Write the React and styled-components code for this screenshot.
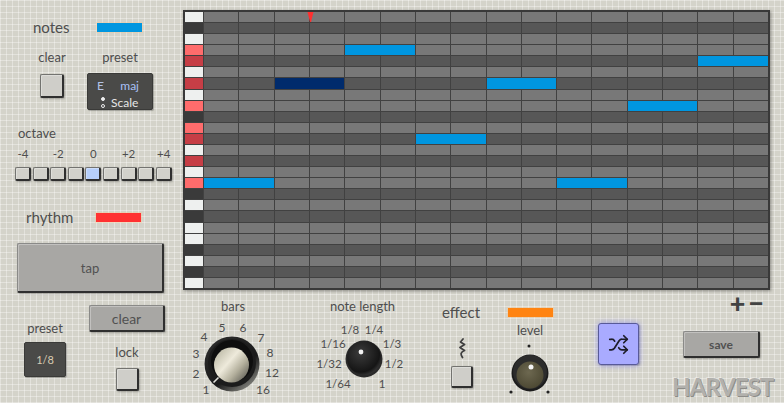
import React from "react";
import styled, { createGlobalStyle, css } from "styled-components";
import { Shuffle } from "lucide-react";

const GlobalStyle = createGlobalStyle`
  html, body { margin: 0; padding: 0; }
  body { font-family: "Lato", "Open Sans", sans-serif; background: #d5d4cb; }
`;

const bevel = css`
  box-sizing: border-box;
  border: 1px solid #737370;
  border-right: 2px solid #2f2f2f;
  border-bottom: 2px solid #2f2f2f;
  border-radius: 2px;
  box-shadow: 1px 1px 2px rgba(0, 0, 0, 0.25), inset 1px 1px 0 rgba(255, 255, 255, 0.3);
`;

const Panel = styled.div`
  width: 784px;
  height: 403px;
  overflow: hidden;
  display: flex;
  background-color: #d4d3ca;
  background-image: linear-gradient(rgba(255, 255, 255, 0.35) 1px, transparent 1px),
    linear-gradient(90deg, rgba(255, 255, 255, 0.35) 1px, transparent 1px);
  background-size: 6px 6px;
  color: #4e4e4e;
`;

const Side = styled.div`
  width: 183px;
  flex-shrink: 0;
  display: flex;
  flex-direction: column;
`;

const Label = styled.div`
  font-size: ${(p) => p.size || 13}px;
  line-height: 14px;
  white-space: nowrap;
  text-align: ${(p) => (p.center ? "center" : "left")};
`;

const TitleRow = styled.div`
  display: flex;
  align-items: center;
  height: 16px;
  margin-top: ${(p) => p.top}px;
  padding-left: ${(p) => p.left}px;
`;

const TitleText = styled.div`
  width: ${(p) => p.w}px;
  font-size: 15px;
  line-height: 16px;
`;

const ColorBar = styled.div`
  width: 45px;
  height: 9px;
  background: ${(p) => p.color};
  box-shadow: 0 0 0 1px rgba(255, 200, 140, 0.35);
`;

const PairRow = styled.div`
  display: flex;
  margin-top: 15px;
  padding-left: 38px;
`;

const Stack = styled.div`
  display: flex;
  flex-direction: column;
  align-items: center;
  width: ${(p) => p.w}px;
  margin-left: ${(p) => p.ml || 0}px;
  margin-top: ${(p) => p.mt || 0}px;
`;

const SmallButton = styled.div`
  ${bevel};
  width: ${(p) => p.size}px;
  height: ${(p) => p.size}px;
  margin-top: ${(p) => p.mt || 0}px;
  background: #cfcec9;
`;

const DarkBox = styled.div`
  box-sizing: border-box;
  display: flex;
  flex-direction: column;
  justify-content: ${(p) => (p.centered ? "center" : "flex-start")};
  align-items: ${(p) => (p.centered ? "center" : "stretch")};
  width: ${(p) => p.w}px;
  height: ${(p) => p.h}px;
  margin-top: ${(p) => p.mt || 0}px;
  background: #4a4a48;
  border: 1px solid #3a3a38;
  border-radius: 2px;
  box-shadow: 1px 1px 1px rgba(0, 0, 0, 0.25);
  color: ${(p) => p.ink || "#e6e6e6"};
  font-size: ${(p) => p.fs || 12}px;
`;

const PresetLine = styled.div`
  display: flex;
  align-items: center;
  justify-content: ${(p) => p.justify || "flex-start"};
  padding: ${(p) => p.pad};
  height: 14px;
`;

const Blueish = styled.span`
  color: ${(p) => p.color};
`;

const Dots = styled.div`
  display: flex;
  flex-direction: column;
  gap: 3px;
  margin-right: 6px;
`;

const Dot = styled.div`
  width: 4px;
  height: 4px;
  border-radius: 50%;
  box-sizing: border-box;
  border: 1px solid #eee;
  background: ${(p) => (p.filled ? "#eee" : "transparent")};
`;

const OctaveGrid = styled.div`
  display: grid;
  grid-template-columns: repeat(9, 16px);
  column-gap: 1.6px;
  margin-left: 15px;
  margin-top: ${(p) => p.mt}px;
`;

const OctaveNum = styled.div`
  grid-column: ${(p) => p.col} / span 1;
  font-size: 11.5px;
  line-height: 12px;
  text-align: center;
  white-space: nowrap;
  justify-self: center;
`;

const OctaveBox = styled.div`
  ${bevel};
  height: 14px;
  background: ${(p) => (p.active ? "#b6cffb" : "#d2d1cb")};
`;

const BigButton = styled.div`
  ${bevel};
  display: flex;
  align-items: center;
  justify-content: center;
  width: ${(p) => p.w}px;
  height: ${(p) => p.h}px;
  margin-top: ${(p) => p.mt || 0}px;
  margin-left: ${(p) => p.ml || 0}px;
  background: #a8a7a4;
  border-top-color: #8a8a88;
  border-left-color: #8a8a88;
  font-size: ${(p) => p.fs || 13}px;
  font-weight: ${(p) => (p.bold ? 700 : 400)};
  color: #515151;
`;

const BottomLeft = styled.div`
  display: flex;
  margin-top: 12px;
  padding-left: 24px;
`;

const Main = styled.div`
  display: flex;
  flex-direction: column;
  flex: 1;
`;

const Frame = styled.div`
  position: relative;
  box-sizing: border-box;
  width: 587px;
  height: 280px;
  margin-top: 10px;
  border: 2px solid #393939;
  background: #414141;
  box-shadow: 1px 1px 3px rgba(0, 0, 0, 0.35);
`;

const Roll = styled.div`
  display: grid;
  grid-template-columns: 18px repeat(16, 1fr);
  grid-template-rows: repeat(25, 1fr);
  column-gap: 1px;
  row-gap: 1px;
  width: 100%;
  height: 100%;
`;

const keyColors = {
  w: "#eef0ef",
  b: "#3a3a3a",
  lr: "#ff6c6c",
  dr: "#c63e46",
};

const Key = styled.div`
  grid-row: ${(p) => p.row + 1};
  grid-column: 1;
  background: ${(p) => keyColors[p.kind]};
`;

const Cell = styled.div`
  grid-row: ${(p) => p.row + 1};
  grid-column: ${(p) => p.col + 2};
  background: ${(p) => (p.dark ? "#575757" : "#787878")};
`;

const Note = styled.div`
  grid-row: ${(p) => p.row + 1};
  grid-column: ${(p) => p.col + 2} / span 2;
  background: ${(p) => p.color};
  z-index: 1;
`;

const Playhead = styled.svg`
  position: absolute;
  left: 122px;
  top: 0;
  z-index: 2;
`;

const Deck = styled.div`
  display: flex;
  align-items: flex-start;
  height: 113px;
`;

const Group = styled.div`
  display: flex;
  flex-direction: column;
  align-items: ${(p) => p.align || "center"};
  width: ${(p) => p.w}px;
  margin-left: ${(p) => p.ml || 0}px;
  margin-top: ${(p) => p.mt || 0}px;
  flex-shrink: 0;
`;

const DialText = styled.text`
  font-family: "Lato", "Open Sans", sans-serif;
  font-size: ${(p) => p.size}px;
  fill: #4e4e4e;
`;

const Row = styled.div`
  display: flex;
  align-items: ${(p) => p.align || "flex-start"};
`;

const ShuffleButton = styled.div`
  box-sizing: border-box;
  display: flex;
  align-items: center;
  justify-content: center;
  width: 41px;
  height: 42px;
  margin-left: 42px;
  margin-top: 33px;
  background: #a9abff;
  border: 1.5px solid #585a98;
  border-radius: 3px;
  box-shadow: 0 0 6px rgba(140, 140, 255, 0.7), 1px 1px 2px rgba(0, 0, 0, 0.3);
  color: #1e1e2a;
`;

const PlusMinus = styled.div`
  align-self: flex-end;
  margin-right: 17px;
  margin-top: 4px;
  font-size: 27px;
  font-weight: 900;
  line-height: 18px;
  color: #434343;
  letter-spacing: 3px;
`;

const Logo = styled.div`
  margin-top: 17px;
  font-size: 24px;
  font-weight: 700;
  line-height: 24px;
  letter-spacing: -1px;
  white-space: nowrap;
  color: #b2b1ad;
  text-shadow: 1px 1px 0 #8d8c88, -1px -1px 0 rgba(255, 255, 255, 0.4);
`;

const keys = ["w", "b", "w", "lr", "dr", "w", "dr", "w", "lr", "b", "lr", "dr", "w", "dr", "w", "lr", "b", "w", "b", "w", "w", "b", "w", "b", "w"];

const notes = [
  { row: 3, col: 4, color: "#0096e0" },
  { row: 4, col: 14, color: "#0096e0" },
  { row: 6, col: 2, color: "#002b6c" },
  { row: 6, col: 8, color: "#0096e0" },
  { row: 8, col: 12, color: "#0096e0" },
  { row: 11, col: 6, color: "#0096e0" },
  { row: 15, col: 0, color: "#0096e0" },
  { row: 15, col: 10, color: "#0096e0" },
];

const barsLabels = [
  ["1", 23, 76], ["2", 13, 60], ["3", 13, 40], ["4", 21, 23], ["5", 39, 14],
  ["6", 60, 14], ["7", 78, 24], ["8", 87, 39], ["12", 89, 59], ["16", 80, 76],
];

const lengthLabels = [
  ["1/8", 40, 16], ["1/4", 64, 16], ["1/16", 23, 30], ["1/3", 82, 30],
  ["1/32", 19, 50], ["1/2", 84, 50], ["1/64", 28, 70], ["1", 72, 70],
];

function PianoRoll() {
  return (
    <Frame>
      <Roll>
        {keys.map((k, r) => (
          <React.Fragment key={r}>
            <Key row={r} kind={k} />
            {Array.from({ length: 16 }, (_, c) => (
              <Cell key={c} row={r} col={c} dark={k === "b" || k === "dr"} />
            ))}
          </React.Fragment>
        ))}
        {notes.map((n, i) => (
          <Note key={i} {...n} />
        ))}
      </Roll>
      <Playhead width="8" height="11" viewBox="0 0 8 11">
        <polygon points="0.5,0 6.5,0 4,10 3,10" fill="#ff2f2f" />
      </Playhead>
    </Frame>
  );
}

function BarsDial() {
  return (
    <svg width="100" height="87" viewBox="0 0 100 87">
      <defs>
        <linearGradient id="rim" x1="0.2" y1="0.1" x2="0.85" y2="0.95">
          <stop offset="0" stopColor="#2a2a2a" />
          <stop offset="0.6" stopColor="#1a1a1a" />
          <stop offset="1" stopColor="#8a8a84" />
        </linearGradient>
        <linearGradient id="cap" x1="0.15" y1="0.2" x2="0.9" y2="0.85">
          <stop offset="0" stopColor="#c9c6b4" />
          <stop offset="0.35" stopColor="#eeeadb" />
          <stop offset="0.7" stopColor="#b3af9c" />
          <stop offset="1" stopColor="#6f6d63" />
        </linearGradient>
      </defs>
      {barsLabels.map(([t, x, y]) => (
        <DialText key={t} x={x} y={y} size={12} textAnchor="middle" dominantBaseline="central">
          {t}
        </DialText>
      ))}
      <circle cx="49" cy="51" r="27.5" fill="url(#rim)" />
      <circle cx="49" cy="50" r="24" fill="#1c1c1c" />
      <circle cx="49" cy="48" r="21" fill="#0e0e0e" />
      <circle cx="48.5" cy="52" r="17.5" fill="url(#cap)" />
      <line x1="35.5" y1="64.5" x2="30.5" y2="69.5" stroke="#e2e2dc" strokeWidth="1.6" />
    </svg>
  );
}

function LengthDial() {
  return (
    <svg width="105" height="84" viewBox="0 0 105 84">
      <defs>
        <radialGradient id="blk" cx="0.4" cy="0.35" r="0.7">
          <stop offset="0" stopColor="#3b3b3b" />
          <stop offset="0.8" stopColor="#151515" />
          <stop offset="1" stopColor="#3a3a3a" />
        </radialGradient>
      </defs>
      {lengthLabels.map(([t, x, y]) => (
        <DialText key={t} x={x} y={y} size={11.5} textAnchor="middle" dominantBaseline="central">
          {t}
        </DialText>
      ))}
      <circle cx="54" cy="46" r="18.5" fill="#2a2a2a" />
      <circle cx="54" cy="45" r="17" fill="url(#blk)" />
      <circle cx="51" cy="39" r="2.4" fill="#f2f2f2" />
    </svg>
  );
}

function LevelDial() {
  return (
    <svg width="50" height="60" viewBox="0 0 50 60">
      <defs>
        <radialGradient id="olive" cx="0.45" cy="0.4" r="0.7">
          <stop offset="0" stopColor="#6d6850" />
          <stop offset="1" stopColor="#48442f" />
        </radialGradient>
      </defs>
      <circle cx="24" cy="9" r="1.5" fill="#222" />
      <circle cx="6" cy="55" r="1.6" fill="#222" />
      <circle cx="43" cy="55" r="1.6" fill="#222" />
      <circle cx="25" cy="36" r="18.5" fill="#1c1c1c" />
      <circle cx="25" cy="35" r="17" fill="#2c2c2c" />
      <circle cx="25" cy="38" r="13.5" fill="url(#olive)" />
      <circle cx="26" cy="30" r="2.5" fill="#f4f4f4" />
    </svg>
  );
}

function Squiggle() {
  return (
    <svg width="10" height="21" viewBox="0 0 10 21">
      <path
        d="M6 1 L3.5 4 L7.5 6.5 L3 9.5 L7.5 12.5 C4 14 3 16 5.5 19.5"
        fill="none"
        stroke="#3f3f3f"
        strokeWidth="1.8"
        strokeLinejoin="round"
        strokeLinecap="round"
      />
    </svg>
  );
}

export default function App() {
  const octaveNums = [
    ["-4", 1],
    ["-2", 3],
    ["0", 5],
    ["+2", 7],
    ["+4", 9],
  ];
  return (
    <>
      <GlobalStyle />
      <Panel>
        <Side>
          <TitleRow top={19} left={33}>
            <TitleText w={64}>notes</TitleText>
            <ColorBar color="#0096e0" />
          </TitleRow>
          <PairRow>
            <Stack w={28}>
              <Label>clear</Label>
              <SmallButton size={24} mt={10} />
            </Stack>
            <Stack w={66} ml={21}>
              <Label>preset</Label>
              <DarkBox w={66} h={37} mt={9}>
                <PresetLine justify="space-between" pad="4px 13px 0 9px">
                  <Blueish color="#b4c3e6">E</Blueish>
                  <Blueish color="#a9c0f6">maj</Blueish>
                </PresetLine>
                <PresetLine pad="3px 0 0 13px">
                  <Dots>
                    <Dot filled />
                    <Dot />
                  </Dots>
                  <span>Scale</span>
                </PresetLine>
              </DarkBox>
            </Stack>
          </PairRow>
          <TitleRow top={15} left={18}>
            <Label>octave</Label>
          </TitleRow>
          <OctaveGrid mt={7}>
            {octaveNums.map(([t, c]) => (
              <OctaveNum key={t} col={c}>
                {t}
              </OctaveNum>
            ))}
          </OctaveGrid>
          <OctaveGrid mt={7}>
            {Array.from({ length: 9 }, (_, i) => (
              <OctaveBox key={i} active={i === 4} />
            ))}
          </OctaveGrid>
          <TitleRow top={28} left={26}>
            <TitleText w={70}>rhythm</TitleText>
            <ColorBar color="#ff3232" />
          </TitleRow>
          <BigButton w={147} h={50} mt={18} ml={17}>
            tap
          </BigButton>
          <BottomLeft>
            <Stack w={42} mt={16}>
              <Label>preset</Label>
              <DarkBox w={42} h={35} mt={7} centered ink="#d9ccb2" fs={11}>
                1/8
              </DarkBox>
            </Stack>
            <Stack w={76} ml={23}>
              <BigButton w={76} h={27} fs={14}>
                clear
              </BigButton>
              <Label style={{ marginTop: 13 }}>lock</Label>
              <SmallButton size={23} mt={9} />
            </Stack>
          </BottomLeft>
        </Side>
        <Main>
          <PianoRoll />
          <Deck>
            <Group w={100}>
              <Label style={{ marginTop: 9 }}>bars</Label>
              <BarsDial />
            </Group>
            <Group w={105} ml={27}>
              <Label style={{ marginTop: 9 }}>note length</Label>
              <LengthDial />
            </Group>
            <Group w={116} ml={25} align="flex-start">
              <TitleRow top={14} left={2}>
                <TitleText w={66}>effect</TitleText>
                <ColorBar color="#ff8412" />
              </TitleRow>
              <Row>
                <Stack w={22} ml={11} mt={18}>
                  <Squiggle />
                  <SmallButton size={22} mt={7} />
                </Stack>
                <Stack w={50} ml={32} mt={3}>
                  <Label>level</Label>
                  <LevelDial />
                </Stack>
              </Row>
            </Group>
            <ShuffleButton>
              <Shuffle size={21} strokeWidth={2} />
            </ShuffleButton>
            <Group w={112} ml={33} align="flex-start">
              <PlusMinus>+−</PlusMinus>
              <BigButton w={77} h={27} mt={19} ml={11} fs={12} bold>
                save
              </BigButton>
              <Logo>HARVEST</Logo>
            </Group>
          </Deck>
        </Main>
      </Panel>
    </>
  );
}
